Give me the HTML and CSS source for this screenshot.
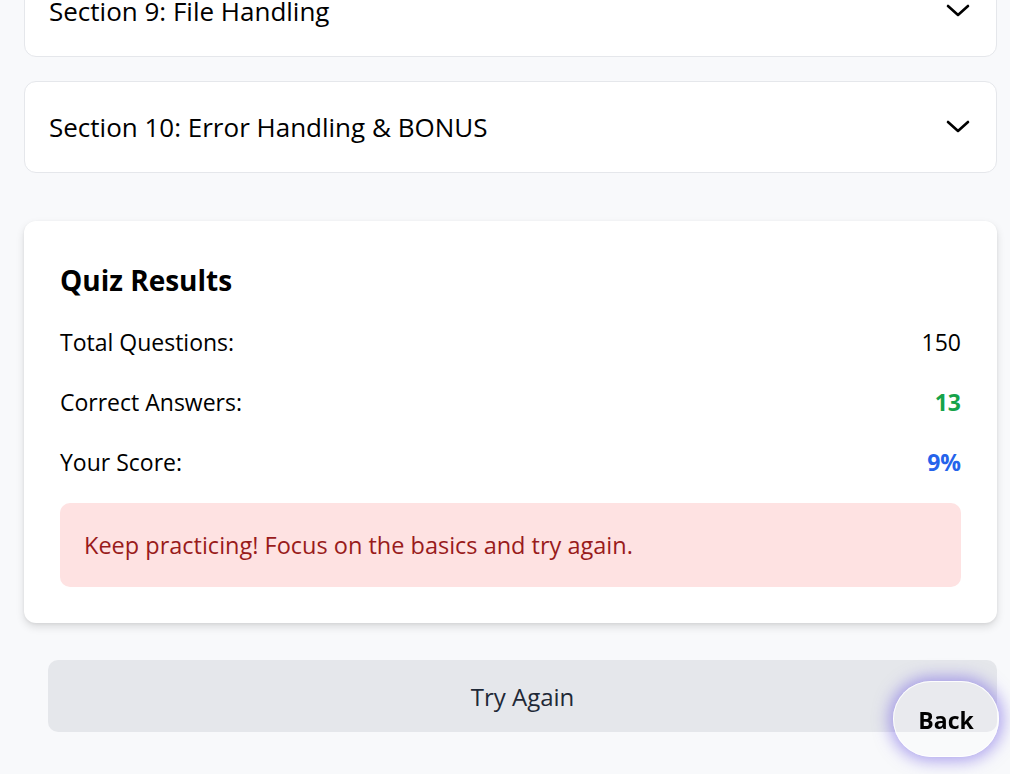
FILE: index.html
```html
<!DOCTYPE html>
<html lang="en">
<head>
<meta charset="utf-8">
<title>Quiz</title>
<link rel="stylesheet" href="styles.css">
</head>
<body>
<main class="page">
  <section class="accordion">
    <div class="acc-item">
      <span class="acc-title">Section 9: File Handling</span>
      <svg class="chev" width="24" height="24" viewBox="0 0 24 24"><polyline points="2,7 12,16 22,7"/></svg>
    </div>
    <div class="acc-item">
      <span class="acc-title">Section 10: Error Handling &amp; BONUS</span>
      <svg class="chev" width="24" height="24" viewBox="0 0 24 24"><polyline points="2,7 12,16 22,7"/></svg>
    </div>
  </section>

  <section class="results">
    <h2 class="results-title">Quiz Results</h2>
    <div class="rows">
      <div class="row"><span class="label">Total Questions:</span><span class="val">150</span></div>
      <div class="row"><span class="label">Correct Answers:</span><span class="val val-green">13</span></div>
      <div class="row"><span class="label">Your Score:</span><span class="val val-blue">9%</span></div>
    </div>
    <div class="message">Keep practicing! Focus on the basics and try again.</div>
  </section>

  <button class="retry">Try Again</button>
</main>
<button class="back">Back</button>
</body>
</html>
```

FILE: styles.css
```css
* { box-sizing: border-box; }
html, body { margin: 0; padding: 0; }
body {
  background: #f8f9fb;
  font-family: "Open Sans", "Noto Sans", sans-serif;
  color: #000;
  height: 774px;
  overflow: hidden;
}
.page {
  padding: 0 13px 0 24px;
  margin-top: -35px;
  display: flex;
  flex-direction: column;
}
.accordion {
  display: flex;
  flex-direction: column;
  gap: 24px;
}
.acc-item {
  height: 92px;
  background: #fff;
  border: 1px solid #e5e7eb;
  border-radius: 12px;
  display: flex;
  align-items: center;
  justify-content: space-between;
  padding: 0 26px 0 24px;
}
.acc-title {
  font-size: 26px;
  font-weight: 500;
  line-height: 36px;
}
.chev polyline {
  fill: none;
  stroke: #000;
  stroke-width: 2.6;
  stroke-linecap: round;
  stroke-linejoin: round;
}
.results {
  margin-top: 48px;
  background: #fff;
  border-radius: 12px;
  box-shadow: 0 4px 8px rgba(0,0,0,0.12), 0 1px 3px rgba(0,0,0,0.06);
  padding: 41px 36px 36px 36px;
}
.results-title {
  margin: 0 0 29px;
  font-size: 28px;
  font-weight: 700;
  line-height: 36px;
}
.rows {
  display: flex;
  flex-direction: column;
  gap: 30px;
}
.row {
  display: flex;
  justify-content: space-between;
  align-items: center;
  height: 30px;
  font-size: 23px;
  font-weight: 500;
}
.val { font-weight: 400; }
.val-green { color: #16a34a; font-weight: 700; }
.val-blue { color: #2563eb; font-weight: 700; }
.message {
  margin-top: 26px;
  background: #fee2e2;
  color: #991b1b;
  border-radius: 10px;
  height: 84px;
  display: flex;
  align-items: center;
  padding: 0 24px;
  font-size: 23.5px;
  font-weight: 500;
}
.retry {
  margin: 37px 0 0 24px;
  height: 72px;
  border: none;
  background: #e5e7eb;
  color: #1f2937;
  border-radius: 10px;
  font-family: inherit;
  font-size: 24px;
  font-weight: 500;
}
.back {
  position: fixed;
  left: 893px;
  top: 681px;
  width: 106px;
  height: 76px;
  border-radius: 38px;
  border: 1.5px solid rgba(255,255,255,0.9);
  background: rgba(255,255,255,0.15);
  box-shadow: 0 0 16px 4px rgba(110,90,225,0.55);
  font-family: inherit;
  font-size: 23px;
  font-weight: 700;
  color: #000;
  padding-top: 2px;
}
```
